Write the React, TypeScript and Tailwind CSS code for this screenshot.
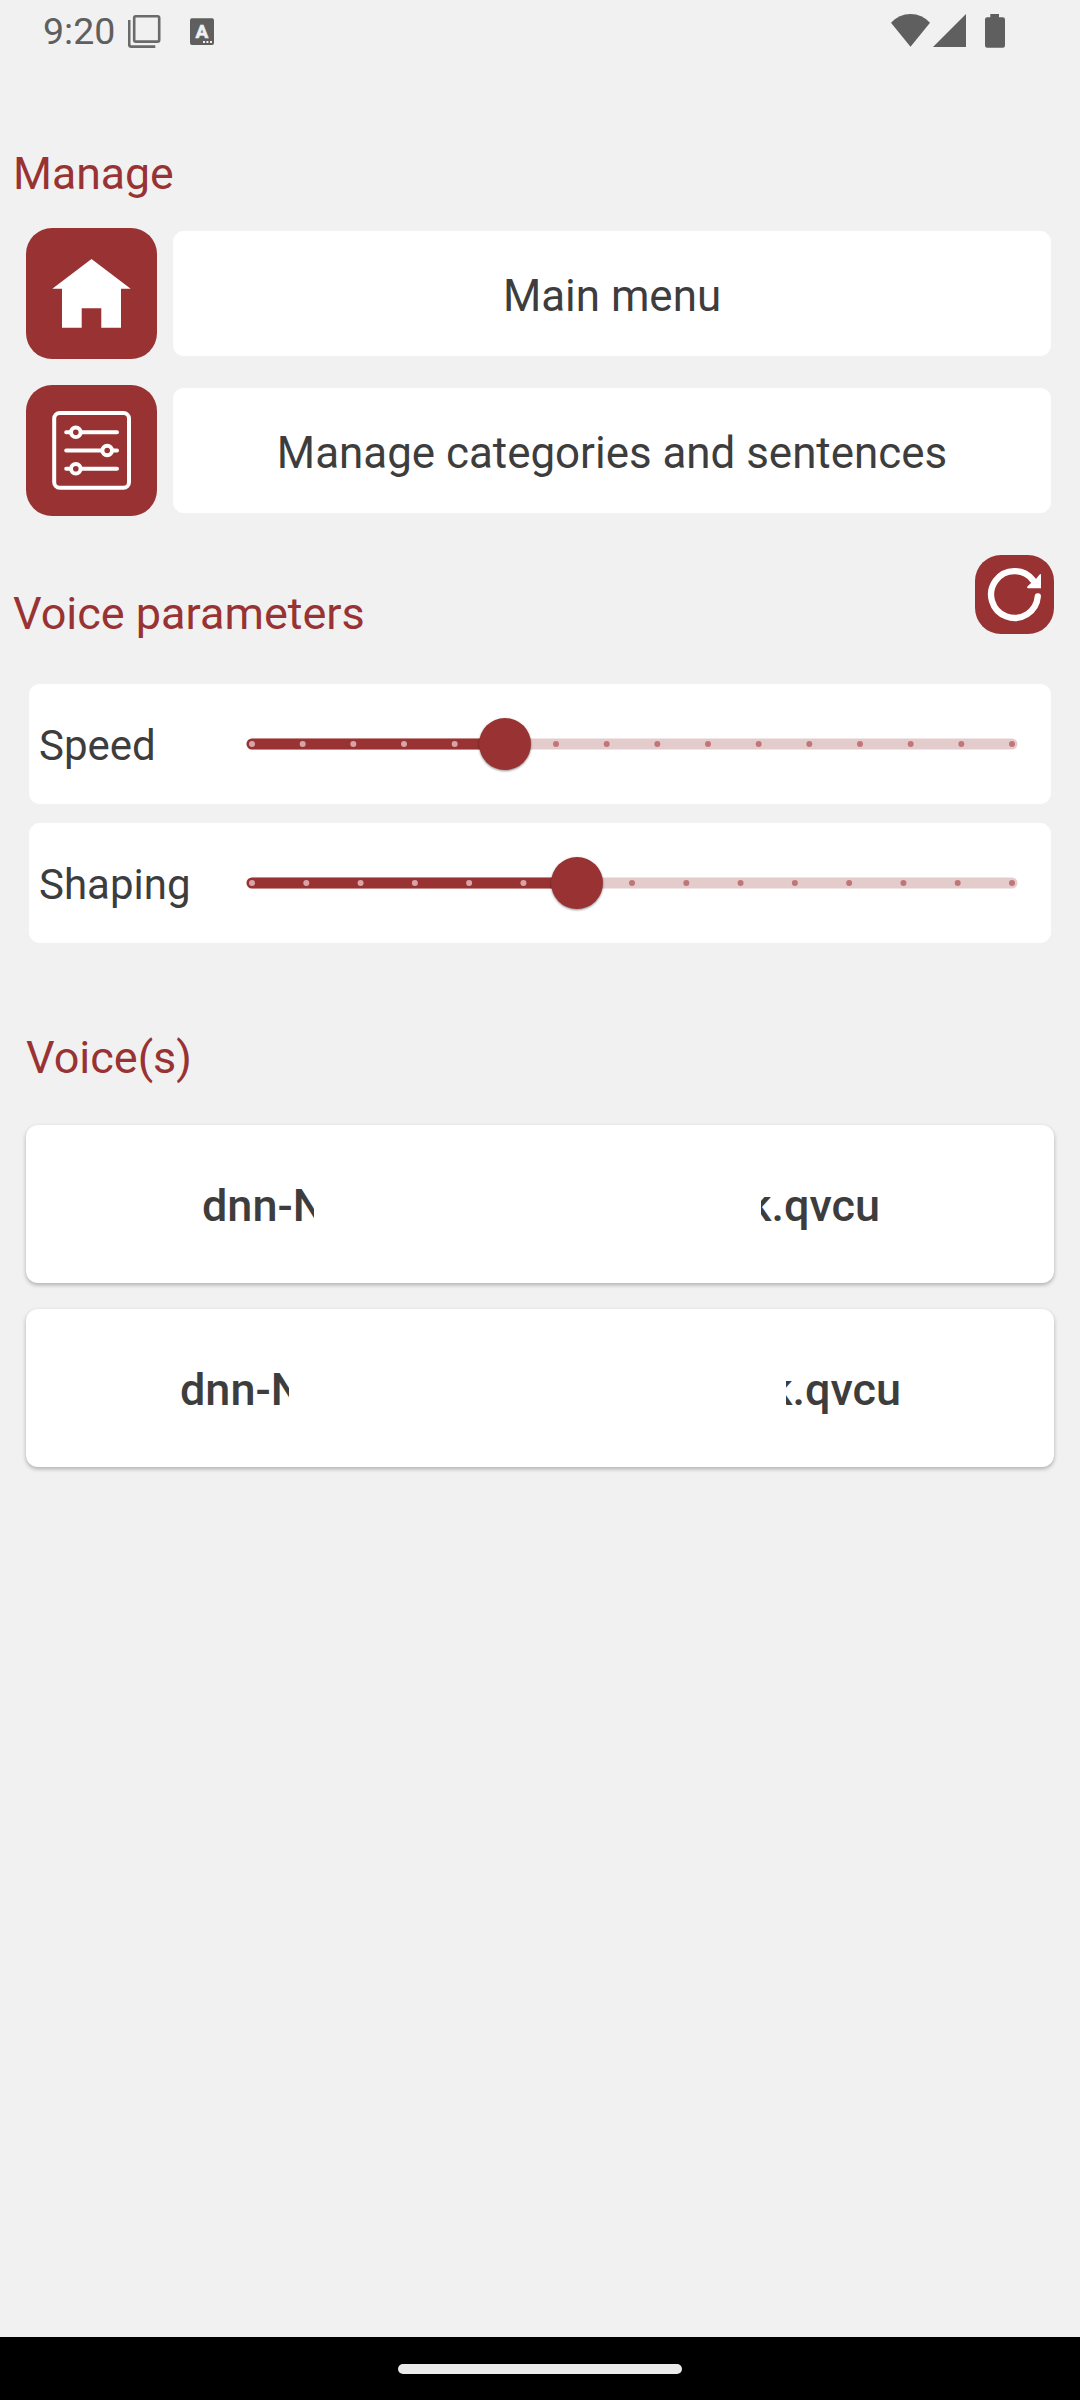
import React from 'react'

function StatusBar() {
    return (
        <header className="flex h-[62px] items-center pl-[43px] pr-[74px] text-[#5f5f5f]">
            <span className="w-[85px] text-[37.5px] leading-[62px]">9:20</span>

            {/* Stacked windows */}
            <svg className="h-[62px] w-[34px]" viewBox="128 0 34 62" fill="none" stroke="#6a6a6a" strokeWidth="2.6">
                <rect x="134.2" y="16.2" width="25" height="25.4" rx="1.6" />
                <path d="M129.2 20V44.6Q129.2 46.6 131.2 46.6H155.3" />
            </svg>

            {/* Keyboard language */}
            <svg className="ml-7 h-[62px] w-[24px]" viewBox="190 0 24 62">
                <rect x="190" y="18.3" width="24" height="26.7" rx="2" fill="#5f5f5f" />
                <text x="202" y="38" textAnchor="middle" stroke="#f0f0f0" strokeWidth="0.6" className="fill-[#f0f0f0] text-[19px] font-bold">A</text>
                <path d="M203 41h2v2h-2zM206.4 41h2v2h-2zM210 41h2v2h-2z" fill="#f0f0f0" />
            </svg>

            <svg className="ml-auto h-[62px] w-[115px]" viewBox="891 0 115 62" fill="#5f5f5f">
                <path d="M910.5 46.7L891 22.8Q899 14 910.5 14T930 22.8Z" />
                <path d="M966 14V47H933Z" />
                <path d="M990.3 14H999V17.3H1002.8Q1005 17.3 1005 19.5V45.5Q1005 47.7 1002.8 47.7H987.2Q985 47.7 985 45.5V19.5Q985 17.3 987.2 17.3H990.3Z" />
            </svg>
        </header>
    )
}

function HomeIcon() {
    return (
        <svg className="size-[131px]" viewBox="0 0 131 131" fill="white">
            <path d="M65.5 31L104.7 60.7H95V99.7H75.3V80.2H55.7V99.7H36V60.7H26.3Z" />
        </svg>
    )
}

function TuneIcon() {
    return (
        <svg className="size-[131px]" viewBox="0 0 131 131" fill="none" stroke="white" strokeWidth="4" strokeLinecap="round">
            <rect x="28.2" y="28" width="74.8" height="74.8" rx="5.5" />
            <path d="M40.2 47.3H43M56 47.3H91M40.2 65.5H75M87 65.5H91M40.2 83.7H43M56 83.7H91" />
            <circle cx="49.8" cy="47.3" r="4.8" />
            <circle cx="81.2" cy="65.5" r="4.8" />
            <circle cx="49.8" cy="83.7" r="4.8" />
        </svg>
    )
}

function ResetIcon() {
    return (
        <svg className="size-[79px]" viewBox="0 0 79 79" fill="none">
            <path d="M62.8 41.5A23.4 23.4 0 1 1 58 25.2" stroke="white" strokeWidth="6.3" strokeLinecap="round" />
            <path d="M66 19.5V33.2H53Q51.2 32.6 52.4 31.4L55.5 28.5L61 24L64.4 19.8Q65.4 18.6 66 19.5Z" fill="white" />
        </svg>
    )
}

type MenuRowProps = { icon: React.ReactNode; label: string }

function MenuRow({ icon, label }: MenuRowProps) {
    return (
        <div className="flex items-center gap-4 pl-[26px] pr-[29px]">
            <button className="flex size-[131px] shrink-0 items-center justify-center rounded-[26px] bg-[#993333]">
                {icon}
            </button>
            <button className="h-[125px] flex-1 rounded-[11px] bg-white pt-[5px] text-[43.9px] leading-[60px]">
                {label}
            </button>
        </div>
    )
}

type SliderRowProps = { label: string; steps: number; value: number }

function SliderRow({ label, steps, value }: SliderRowProps) {
    const step = 760 / steps
    const thumbX = 6 + Math.floor(value * step)

    return (
        <div className="flex h-[120px] items-center rounded-[11px] bg-white pl-[10px]">
            <span className="w-[197px] pt-[3px] text-[42px] leading-[60px]">{label}</span>
            <svg className="h-[60px] w-[792px]" viewBox="-10 -30 792 60">
                <rect x="0.5" y="-5.5" width="771" height="11" rx="5.5" fill="#e5cccc" />
                <rect x="0.5" y="-5.5" width={thumbX} height="11" rx="5.5" fill="#993333" />
                {Array.from({ length: steps + 1 }, (_, i) => (
                    <circle key={i} cx={6 + i * step} cy="0" r="3" fill={i < value ? '#d7a5a8' : '#c07678'} />
                ))}
                <circle cx={thumbX} cy="0" r="26" fill="#993333" className="drop-shadow-[0_1px_1px_rgba(0,0,0,0.45)]" />
            </svg>
        </div>
    )
}

export default function App() {
    return (
        <div className="flex h-[2400px] w-[1080px] flex-col overflow-hidden bg-[#f1f1f1] font-['Roboto',sans-serif] text-[#3d3d3d]">
            <StatusBar />

            <main className="flex-1">
                {/* Manage */}
                <h2 className="mt-[82px] pl-[13px] text-[44.6px] leading-[60px] text-[#993333]">Manage</h2>
                <div className="mt-6 flex flex-col gap-[26px]">
                    <MenuRow icon={<HomeIcon />} label="Main menu" />
                    <MenuRow icon={<TuneIcon />} label="Manage categories and sentences" />
                </div>

                {/* Voice parameters */}
                <div className="mt-[39px] flex items-start justify-between pl-[13px] pr-[26px]">
                    <h2 className="mt-[29px] text-[45px] leading-[60px] text-[#993333]">Voice parameters</h2>
                    <button className="size-[79px] rounded-[26px] bg-[#993333]">
                        <ResetIcon />
                    </button>
                </div>
                <div className="mx-[29px] mt-10 flex flex-col gap-[19px]">
                    <SliderRow label="Speed" steps={15} value={5} />
                    <SliderRow label="Shaping" steps={14} value={6} />
                </div>

                {/* Voices */}
                <h2 className="mt-[85px] pl-[26px] text-[45px] leading-[60px] text-[#993333]">Voice(s)</h2>
                <div className="mx-[26px] mt-[37px] flex flex-col gap-[26px] text-[45px] font-medium leading-[60px]">
                    <div className="flex h-[158px] items-center justify-between rounded-xl bg-white pl-[176px] pr-[174px] pt-[3px] shadow-[0_2px_4px_rgba(0,0,0,0.28)]">
                        <span className="w-[112px] overflow-hidden whitespace-nowrap">dnn-N</span>
                        <span className="flex w-[119px] justify-end overflow-hidden whitespace-nowrap">k.qvcu</span>
                    </div>
                    <div className="flex h-[158px] items-center justify-between rounded-xl bg-white pl-[154px] pr-[153px] pt-[3px] shadow-[0_2px_4px_rgba(0,0,0,0.28)]">
                        <span className="w-[109px] overflow-hidden whitespace-nowrap">dnn-N</span>
                        <span className="flex w-[115px] justify-end overflow-hidden whitespace-nowrap">k.qvcu</span>
                    </div>
                </div>
            </main>

            {/* Gesture navigation bar */}
            <footer className="flex h-[63px] items-start justify-center bg-black pt-[27px]">
                <div className="h-[10px] w-[284px] rounded-full bg-[#ebebeb]" />
            </footer>
        </div>
    )
}
